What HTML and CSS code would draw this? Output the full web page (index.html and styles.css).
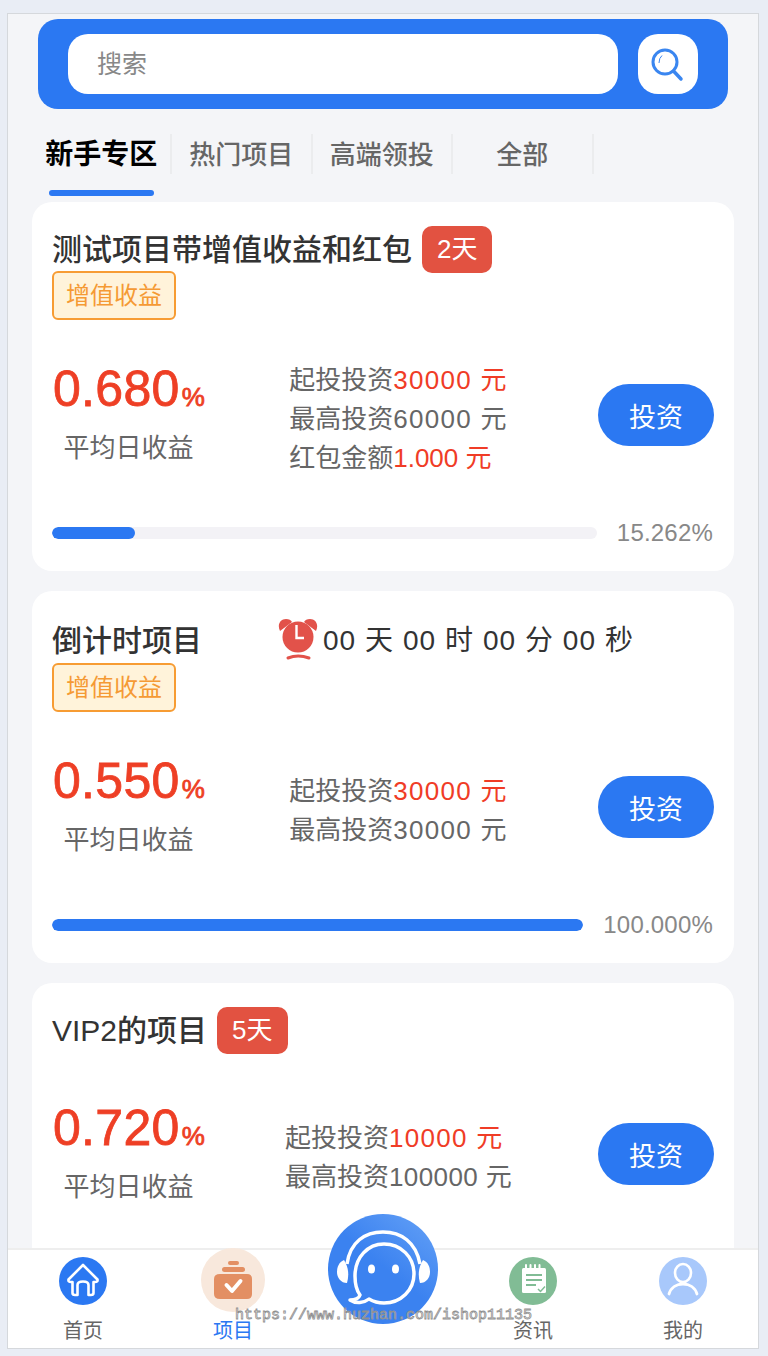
FILE: index.html
```html
<!DOCTYPE html>
<html lang="zh-CN">
<head>
  <meta charset="UTF-8" />
  <meta name="viewport" content="width=device-width, initial-scale=1.0" />
  <title>项目</title>
  <link rel="stylesheet" href="styles.css">
</head>
<body>
  <div class="phone">
    <div class="search-bar">
      <div class="search-input">搜索</div>
      <div class="search-btn">
        <svg width="40" height="40" viewBox="0 0 40 40" fill="none" stroke="#3a86f0">
          <circle cx="17" cy="18" r="12" stroke-width="3"/>
          <path d="M25.5 27 L33 35" stroke-width="3.5" stroke-linecap="round"/>
          <path d="M11 19 Q11 14 14 11.5" stroke-width="1"/>
        </svg>
      </div>
    </div>

    <div class="tabs">
      <div class="tab active">新手专区</div>
      <div class="tab">热门项目</div>
      <div class="tab">高端领投</div>
      <div class="tab">全部</div>
    </div>
    <div class="tab-line"></div>

    <div class="card">
      <div class="card-title">
        <span class="name">测试项目带增值收益和红包</span>
        <span class="days">2天</span>
      </div>
      <div class="tag">增值收益</div>
      <div class="stats">
        <div class="rate">
          <div class="rate-num">0.680<small>%</small></div>
          <div class="rate-label">平均日收益</div>
        </div>
        <div class="info-wrap">
          <div class="info">
            <div>起投投资<span class="red">30000 元</span></div>
            <div>最高投资<span class="num">60000 元</span></div>
            <div>红包金额<span class="red tight">1.000 元</span></div>
          </div>
        </div>
        <div class="invest">投资</div>
      </div>
      <div class="progress">
        <div class="bar"><div class="bar-fill" style="width: 15.262%"></div></div>
        <div class="percent">15.262%</div>
      </div>
    </div>

    <div class="card">
      <div class="card-title timer-row">
        <span class="name">倒计时项目</span>
        <svg class="clock" width="40" height="42" viewBox="0 0 40 42">
          <path d="M2 12 C-1 6 2 0 8 0 C11 0 13 1 14 3 Z M38 12 C41 6 38 0 32 0 C29 0 27 1 26 3 Z" fill="#e2524a"/>
          <circle cx="20" cy="18" r="15.5" fill="#e2524a"/>
          <path d="M18.5 6 V19 H26" fill="none" stroke="#fff" stroke-width="2.4"/>
          <path d="M10 39 Q20 35 31 39" fill="none" stroke="#e2524a" stroke-width="3" stroke-linecap="round"/>
        </svg>
        <span class="timer">00 天 00 时 00 分 00 秒</span>
      </div>
      <div class="tag">增值收益</div>
      <div class="stats">
        <div class="rate">
          <div class="rate-num">0.550<small>%</small></div>
          <div class="rate-label">平均日收益</div>
        </div>
        <div class="info-wrap">
          <div class="info">
            <div>起投投资<span class="red">30000 元</span></div>
            <div>最高投资<span class="num">30000 元</span></div>
          </div>
        </div>
        <div class="invest">投资</div>
      </div>
      <div class="progress">
        <div class="bar"><div class="bar-fill" style="width: 100%"></div></div>
        <div class="percent">100.000%</div>
      </div>
    </div>

    <div class="card card-last">
      <div class="card-title no-tag">
        <span class="name">VIP2的项目</span>
        <span class="days">5天</span>
      </div>
      <div class="stats">
        <div class="rate">
          <div class="rate-num">0.720<small>%</small></div>
          <div class="rate-label">平均日收益</div>
        </div>
        <div class="info-wrap">
          <div class="info">
            <div>起投投资<span class="red">10000 元</span></div>
            <div>最高投资<span class="num narrow">100000 元</span></div>
          </div>
        </div>
        <div class="invest">投资</div>
      </div>
    </div>

    <div class="tabbar">
      <div class="nav-item">
        <svg class="nav-icon" width="48" height="48" viewBox="0 0 48 48">
          <circle cx="24" cy="24" r="24" fill="#2b78f2"/>
          <path d="M24 8 L38.5 22.5 Q39 25 36 25 H34.5 V36 Q34.5 38 32 38 H29.5 V28 Q29.5 24.5 24 24.5 Q18.5 24.5 18.5 28 V38 H16 Q13.5 38 13.5 36 V25 H12 Q9 25 9.5 22.5 Z" fill="none" stroke="#fff" stroke-width="2.6" stroke-linejoin="round"/>
        </svg>
        <span>首页</span>
      </div>
      <div class="nav-item active">
        <svg class="nav-icon big" width="64" height="64" viewBox="0 0 64 64">
          <circle cx="32" cy="32" r="32" fill="#f8e8dc"/>
          <rect x="27" y="13" width="11" height="4" rx="2" fill="#e38f63"/>
          <rect x="21" y="19" width="23" height="5" rx="2.5" fill="#e38f63"/>
          <path d="M19 26 H46 Q51 26 51 31 V46 Q51 51 46 51 H19 Q13 51 13 46 V31 Q13 26 19 26 Z" fill="#e38f63"/>
          <path d="M25.5 37 L31 43 L39.5 33" fill="none" stroke="#fff" stroke-width="4" stroke-linecap="round" stroke-linejoin="round"/>
        </svg>
        <span>项目</span>
      </div>
      <div class="nav-item spacer"></div>
      <div class="nav-item">
        <svg class="nav-icon" width="48" height="48" viewBox="0 0 48 48">
          <circle cx="24" cy="24" r="24" fill="#81bc95"/>
          <rect x="13" y="11" width="24" height="25" rx="1.5" fill="#fff"/>
          <path d="M17 8 V13 M21.5 8 V13 M26 8 V13 M30.5 8 V13" stroke="#fff" stroke-width="2" stroke-linecap="round"/>
          <path d="M17 18 H33 M17 23 H33 M17 28 H27" stroke="#81bc95" stroke-width="2"/>
          <path d="M29 32 L31.5 34.5 L36 29.5" fill="none" stroke="#81bc95" stroke-width="1.5"/>
        </svg>
        <span>资讯</span>
      </div>
      <div class="nav-item">
        <svg class="nav-icon" width="48" height="48" viewBox="0 0 48 48">
          <circle cx="24" cy="24" r="24" fill="#a8c8fb"/>
          <ellipse cx="24" cy="16" rx="8" ry="9" fill="none" stroke="#fff" stroke-width="2.6"/>
          <path d="M10 37 C12 30 18 27 24 27 C30 27 36 30 38 37" fill="none" stroke="#fff" stroke-width="2.8" stroke-linecap="round"/>
        </svg>
        <span>我的</span>
      </div>
    </div>

    <div class="service">
      <svg width="110" height="110" viewBox="0 0 110 110">
        <defs>
          <linearGradient id="serviceBg" x1="0.85" y1="0.1" x2="0.2" y2="0.9">
            <stop offset="0" stop-color="#5b9af5"/>
            <stop offset="0.5" stop-color="#3b82f0"/>
            <stop offset="1" stop-color="#3b82f0"/>
          </linearGradient>
        </defs>
        <circle cx="55" cy="55" r="55" fill="url(#serviceBg)"/>
        <path d="M19 50 C22 28 37 18 55 18 C73 18 88 28 92 50" fill="none" stroke="#fff" stroke-width="3.5"/>
        <path d="M16 46 C11 48 9 53 9 58 C9 64 13 69 19 69 C21 62 21 54 16 46 Z" fill="#fff"/>
        <path d="M95 46 C100 48 102 53 102 58 C102 64 98 69 92 69 C90 62 90 54 95 46 Z" fill="#fff"/>
        <path d="M56 30 C40 30 27 43 27 62 C27 70 29 77 32 81 C31 84 27 86 22 86 C28 90 36 89 41 85 C46 88 51 89 56 89 C73 89 86 76 86 60 C86 43 73 30 56 30 Z" fill="none" stroke="#fff" stroke-width="3.5" stroke-linejoin="round"/>
        <ellipse cx="43.5" cy="55" rx="3.5" ry="4.5" fill="#fff"/>
        <ellipse cx="67.5" cy="55" rx="3.5" ry="4.5" fill="#fff"/>
      </svg>
    </div>

    <div class="watermark">https://www.huzhan.com/ishop11135</div>
  </div>
</body>
</html>
```

FILE: styles.css
```css
html, body {
  margin: 0;
  height: 1356px;
  overflow: hidden;
}
body {
  background-color: #e9edf5;
  padding-top: 13px;
  box-sizing: border-box;
  font-family: "Liberation Sans", "Noto Sans CJK SC", sans-serif;
  color: #333;
}
.phone {
  position: relative;
  width: 752px;
  height: 1336px;
  margin-left: 7px;
  padding-top: 5px;
  box-sizing: border-box;
  border: 1px solid #d5d8dc;
  background-color: #f4f5f8;
  overflow: hidden;
}

/* search */
.search-bar {
  display: flex;
  gap: 20px;
  height: 90px;
  margin: 0 30px;
  padding: 15px 30px;
  box-sizing: border-box;
  background-color: #2b78f2;
  border-radius: 20px;
}
.search-input {
  flex: 1;
  padding-left: 29px;
  line-height: 60px;
  font-size: 25px;
  color: #888;
  background-color: #fff;
  border-radius: 20px;
}
.search-btn {
  display: flex;
  align-items: center;
  justify-content: center;
  width: 60px;
  height: 60px;
  background-color: #fff;
  border-radius: 20px;
}

/* tabs */
.tabs {
  display: flex;
  height: 40px;
  margin: 25px 0 0 23.5px;
}
.tab {
  width: 140.5px;
  box-sizing: border-box;
  border-right: 2px solid #ebecee;
  text-align: center;
  line-height: 42px;
  font-size: 26px;
  font-weight: 500;
  color: #666;
}
.tab.active {
  padding-left: 1px;
  font-size: 28px;
  font-weight: 700;
  color: #000;
}
.tab-line {
  width: 105px;
  height: 6px;
  margin: 16px 0 6px 41px;
  background-color: #2b78f2;
  border-radius: 3px;
}

/* project card */
.card {
  width: 702px;
  margin: 0 0 20px 24px;
  padding: 24px 20px 23px;
  box-sizing: border-box;
  background-color: #fff;
  border-radius: 20px;
}
.card-last {
  padding-bottom: 120px;
}
.card-title {
  display: flex;
  align-items: center;
  height: 47px;
}
.card-title.timer-row {
  height: 50px;
}
.card-title.no-tag + .stats {
  margin-top: 46px;
}
.name {
  margin-top: -5px;
  font-size: 30px;
  font-weight: 500;
  color: #333;
}
.days {
  margin-left: 10px;
  padding: 0 15px;
  line-height: 47px;
  font-size: 26px;
  color: #fff;
  background-color: #e25241;
  border-radius: 10px;
}
.clock {
  margin-left: 76px;
}
.timer {
  margin: -4px 0 0 5px;
  font-size: 28px;
  letter-spacing: 1.05px;
  color: #333;
}
.tag {
  width: 124px;
  height: 49px;
  margin-top: -2px;
  box-sizing: border-box;
  border: 2px solid #f79c33;
  border-radius: 6px;
  text-align: center;
  line-height: 45px;
  font-size: 24px;
  color: #f59a34;
  background-color: #fff3da;
}
.stats {
  display: flex;
  align-items: center;
  height: 108px;
  margin-top: 41px;
}
.rate {
  text-align: center;
}
.rate-num {
  padding-left: 1px;
  line-height: 54px;
  font-size: 50px;
  letter-spacing: 0.3px;
  color: #ee3f25;
  -webkit-text-stroke: 0.8px #ee3f25;
  white-space: nowrap;
}
.rate-num small {
  margin-left: 2px;
  line-height: 1;
  font-size: 26px;
}
.rate-label {
  margin-top: 12px;
  line-height: 40px;
  font-size: 26px;
  color: #666;
}
.info-wrap {
  display: flex;
  flex: 1;
  justify-content: center;
  padding: 8px 6px 0 0;
}
.info {
  line-height: 39px;
  font-size: 26px;
  color: #666;
  white-space: nowrap;
}
.info .red, .info .num {
  letter-spacing: 1.3px;
}
.info .tight {
  letter-spacing: 0;
}
.info .narrow {
  letter-spacing: 0.4px;
}
.red {
  color: #f03c26;
}
.invest {
  width: 116px;
  height: 62px;
  text-align: center;
  line-height: 68px;
  font-size: 27px;
  color: #fff;
  background-color: #2b78f2;
  border-radius: 31px;
}
.progress {
  display: flex;
  align-items: center;
  gap: 20px;
  height: 30px;
  margin: 49px 1px 0 0;
}
.bar {
  flex: 1;
  height: 12px;
  background-color: #f3f2f6;
  border-radius: 6px;
  overflow: hidden;
}
.bar-fill {
  height: 100%;
  background-color: #2b78f2;
  border-radius: 6px;
}
.percent {
  font-size: 24px;
  letter-spacing: 0.2px;
  color: #888;
}

/* bottom nav */
.tabbar {
  position: absolute;
  left: 0;
  right: 0;
  bottom: 0;
  display: flex;
  height: 98px;
  border-top: 2px solid #eeeeee;
  background-color: #fff;
}
.nav-item {
  position: relative;
  flex: 1;
  font-size: 20px;
  color: #666;
  text-align: center;
}
.nav-item span {
  position: absolute;
  left: 0;
  right: 0;
  top: 68px;
  line-height: 26px;
}
.nav-item.active {
  color: #2b78f2;
}
.nav-icon {
  display: block;
  margin: 7px auto 0;
}
.nav-icon.big {
  margin-top: -2px;
}
.service {
  position: absolute;
  left: 320px;
  top: 1200px;
  width: 110px;
  height: 110px;
}
.service svg {
  display: block;
}
.watermark {
  position: absolute;
  left: 227px;
  top: 1292px;
  font-family: "Liberation Mono", monospace;
  font-size: 15px;
  line-height: 20px;
  color: rgba(255, 255, 255, 0.5);
  -webkit-text-stroke: 0.8px #8f8f8f;
  white-space: nowrap;
}
```
